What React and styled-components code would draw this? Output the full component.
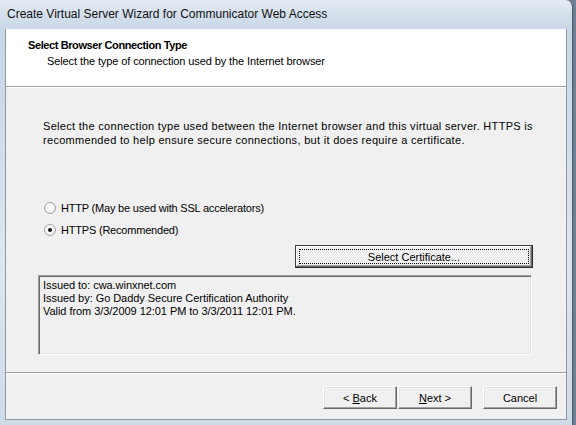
import React from 'react'
import styled, { createGlobalStyle } from 'styled-components'

const Global = createGlobalStyle`
  html, body {
    margin: 0;
    padding: 0;
    width: 576px;
    height: 425px;
    overflow: hidden;
    background: #6f7f93;
  }
  #root {
    width: 576px;
    height: 425px;
  }
`

const Frame = styled.div`
  width: 573px;
  height: 425px;
  box-sizing: border-box;
  border-right: 1px solid #4c5968;
  border-top-right-radius: 7px;
  background: linear-gradient(180deg, #e4ebf3 0px, #d3dfec 16px, #c9d7e7 30px, #cfdbe9 120px, #dde6f0 260px, #cfdae7 425px);
  display: flex;
  flex-direction: column;
  font-family: "Liberation Sans", Arial, sans-serif;
  color: #000;
`

const TitleBar = styled.div`
  height: 29px;
  padding-left: 7px;
  display: flex;
  align-items: center;
  font-size: 12px;
  color: #111;
  padding-bottom: 1px;
  box-sizing: border-box;
`

const Client = styled.div`
  margin-left: 5px;
  width: 562px;
  height: 391px;
  box-sizing: border-box;
  border: 1px solid #8f98a3;
  border-top: none;
  background: #f0f0f0;
  display: flex;
  flex-direction: column;
  font-size: 11px;
`

const Header = styled.div`
  height: 58px;
  box-sizing: border-box;
  background: #fff;
  border-bottom: 1px solid #a0a0a0;
  box-shadow: 0 1px 0 #fff;
  padding: 10px 0 0 22px;
`

const HeaderTitle = styled.div`
  font-weight: bold;
  font-size: 11px;
  line-height: 13px;
  letter-spacing: -0.4px;
`

const HeaderSub = styled.div`
  margin: 3px 0 0 19px;
  line-height: 13px;
  font-size: 11px;
  letter-spacing: -0.1px;
`

const Body = styled.div`
  flex: 1;
  padding: 32px 0 0 32px;
  display: flex;
  flex-direction: column;
  width: 495px;
`

const Paragraph = styled.p`
  margin: 0 0 0 5px;
  line-height: 14px;
  letter-spacing: 0.3px;
  white-space: nowrap;
`

const Options = styled.div`
  margin: 53px 0 0 6px;
  display: flex;
  flex-direction: column;
  gap: 6px;
`

const Option = styled.label`
  display: flex;
  align-items: center;
  height: 16px;
  gap: 5px;
  letter-spacing: -0.2px;
`

const Radio = styled.span`
  width: 10px;
  height: 10px;
  border-radius: 50%;
  border: 1px solid #a4a4a4;
  background: radial-gradient(circle at 40% 35%, #fff 0%, #f6f6f6 50%, #e2e2e2 100%);
  display: flex;
  align-items: center;
  justify-content: center;
  &::after {
    content: '';
    width: 4px;
    height: 4px;
    border-radius: 50%;
    background: ${p => (p.$checked ? '#111' : 'transparent')};
  }
`

const CertRow = styled.div`
  margin-top: 7px;
  display: flex;
  justify-content: flex-end;
`

const DefaultButton = styled.button`
  width: 238px;
  height: 23px;
  box-sizing: border-box;
  border: 1px solid #3d3d3d;
  border-bottom-color: #2a2a2a;
  border-right-color: #2a2a2a;
  box-shadow: inset -1px -1px 0 #696969, inset 1px 1px 0 #fff, inset -2px -2px 0 #a0a0a0;
  background: #f0f0f0;
  padding: 3px;
  font-family: inherit;
  font-size: 11px;
  color: #000;
  display: flex;
`

const Focus = styled.span`
  flex: 1;
  border: 1px dotted #000;
  display: flex;
  align-items: center;
  justify-content: center;
`

const CertBox = styled.div`
  margin-top: 7px;
  height: 80px;
  box-sizing: border-box;
  border-top: 1px solid #a0a0a0;
  border-left: 1px solid #a0a0a0;
  border-right: 1px solid #fff;
  border-bottom: 1px solid #fff;
  box-shadow: inset 1px 1px 0 #696969, inset -1px -1px 0 #e3e3e3;
  padding: 3px 4px;
  line-height: 13px;
  width: 494px;
  letter-spacing: -0.05px;
`

const Footer = styled.div`
  height: 47px;
  box-sizing: border-box;
  border-top: 1px solid #a0a0a0;
  box-shadow: inset 0 1px 0 #fff;
  padding: 13px 9px 0 0;
  display: flex;
  justify-content: flex-end;
  gap: 11px;
`

const Pair = styled.div`
  display: flex;
  gap: 1px;
`

const Button = styled.button`
  width: 74px;
  height: 23px;
  box-sizing: border-box;
  border: 1px solid;
  border-color: #fff #696969 #696969 #fff;
  box-shadow: inset -1px -1px 0 #a0a0a0, inset 1px 1px 0 #e3e3e3;
  background: #f0f0f0;
  font-family: inherit;
  font-size: 11px;
  color: #000;
  padding: 0;
  u { text-decoration: underline; }
`

export default function App() {
  return (
    <>
      <Global />
      <Frame>
        <TitleBar>Create Virtual Server Wizard for Communicator Web Access</TitleBar>
        <Client>
          <Header>
            <HeaderTitle>Select Browser Connection Type</HeaderTitle>
            <HeaderSub>Select the type of connection used by the Internet browser</HeaderSub>
          </Header>
          <Body>
            <Paragraph>
              Select the connection type used between the Internet browser and this virtual server. HTTPS is
              <br />
              recommended to help ensure secure connections, but it does require a certificate.
            </Paragraph>
            <Options>
              <Option>
                <Radio />
                HTTP (May be used with SSL accelerators)
              </Option>
              <Option>
                <Radio $checked />
                HTTPS (Recommended)
              </Option>
            </Options>
            <CertRow>
              <DefaultButton>
                <Focus>Select Certificate...</Focus>
              </DefaultButton>
            </CertRow>
            <CertBox>
              Issued to: cwa.winxnet.com
              <br />
              Issued by: Go Daddy Secure Certification Authority
              <br />
              Valid from 3/3/2009 12:01 PM to 3/3/2011 12:01 PM.
            </CertBox>
          </Body>
          <Footer>
            <Pair>
              <Button>&lt; <u>B</u>ack</Button>
              <Button><u>N</u>ext &gt;</Button>
            </Pair>
            <Button>Cancel</Button>
          </Footer>
        </Client>
      </Frame>
    </>
  )
}
